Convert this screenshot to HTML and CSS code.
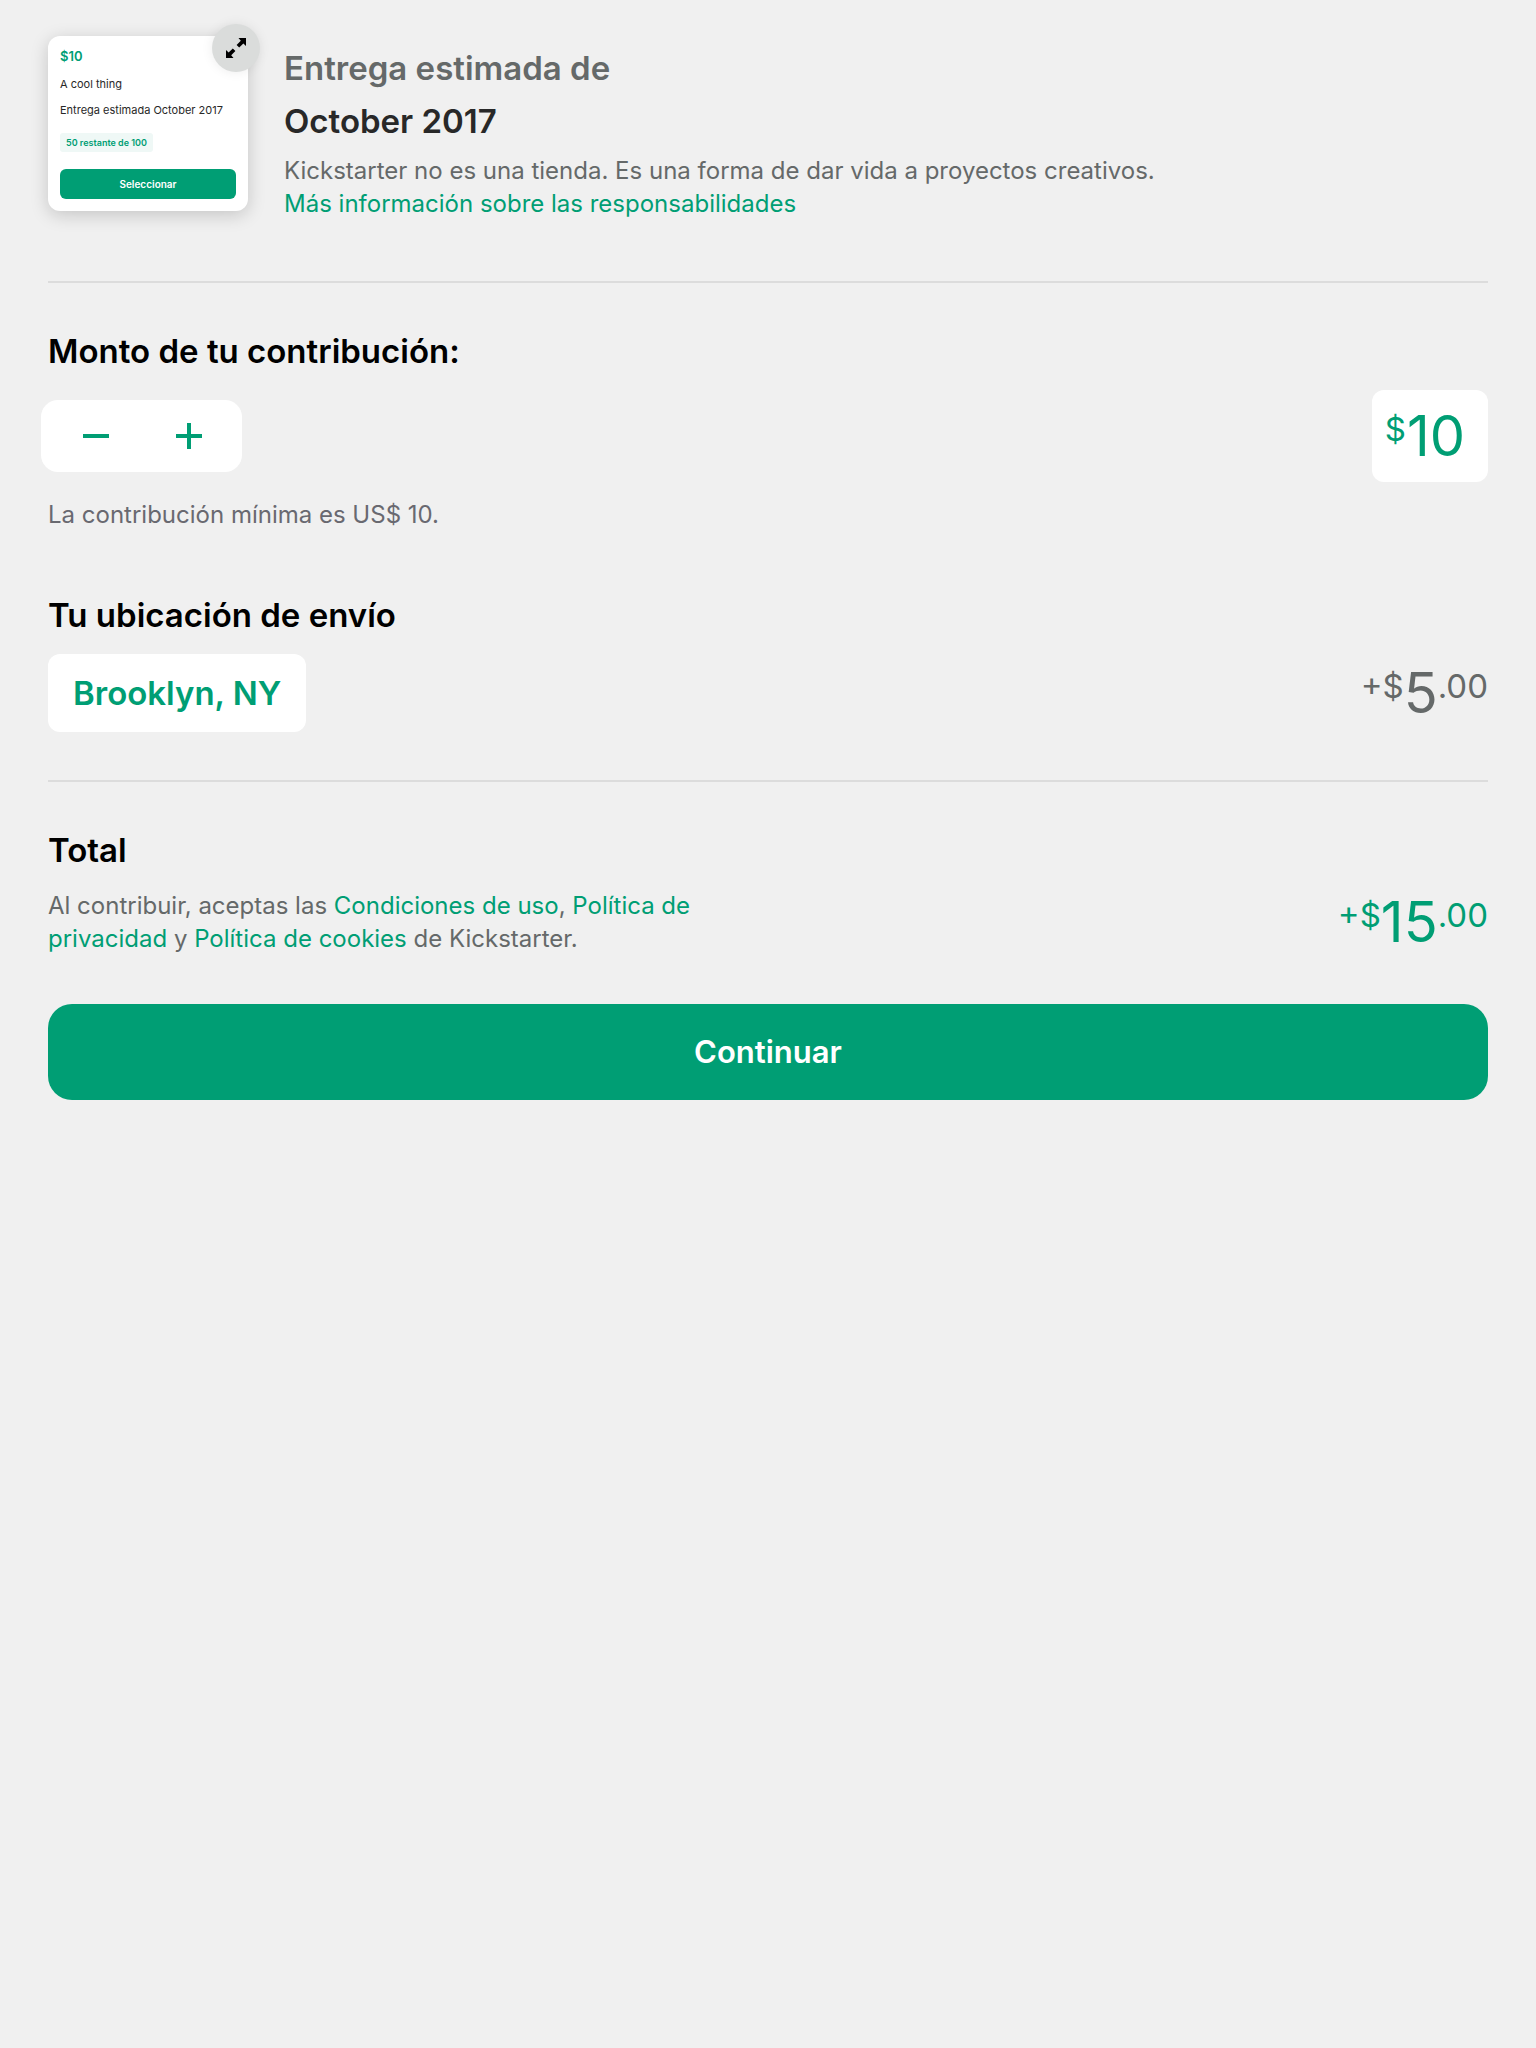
FILE: index.html
```html
<!DOCTYPE html>
<html lang="es">
<head>
<meta charset="utf-8">
<meta name="viewport" content="width=device-width, initial-scale=1">
<title>Contribución</title>
<link rel="stylesheet" href="styles.css">
</head>
<body>
<main class="pledge">
  <header class="summary">
    <div class="reward">
      <p class="reward-price">$10</p>
      <p class="reward-line">A cool thing</p>
      <p class="reward-line">Entrega estimada October 2017</p>
      <span class="reward-badge">50 restante de 100</span>
      <button class="reward-select" type="button">Seleccionar</button>
      <button class="expand" type="button" aria-label="Ampliar">
        <svg width="20" height="20" viewBox="0 0 20 20" aria-hidden="true">
          <path d="M12.500 0H20v8l-2.600-2.600-4.200 4.200-2.600-2.600 4.200-4.200zM7.500 20H0v-8l2.600 2.600 4.200-4.200 2.600 2.600-4.200 4.200z"/>
        </svg>
      </button>
    </div>
    <div class="delivery">
      <h2 class="heading muted">Entrega estimada de</h2>
      <h2 class="heading date">October 2017</h2>
      <p class="copy">Kickstarter no es una tienda. Es una forma de dar vida a proyectos creativos.<br><a class="link" href="#">Más información sobre las responsabilidades</a></p>
    </div>
  </header>

  <section class="section">
    <label class="heading" for="amount">Monto de tu contribución:</label>
    <div class="row">
      <div class="stepper">
        <button class="step" type="button" aria-label="Reducir"><svg width="28" height="28" viewBox="0 0 28 28" aria-hidden="true"><path d="M1 14h26"/></svg></button>
        <button class="step" type="button" aria-label="Aumentar"><svg width="28" height="28" viewBox="0 0 28 28" aria-hidden="true"><path d="M1 14h26M14 1v26"/></svg></button>
      </div>
      <div class="amount price">
        <span class="small">$</span><input class="amount-input" id="amount" type="text" inputmode="numeric" value="10">
      </div>
    </div>
    <p class="copy hint">La contribución mínima es US$ 10.</p>

    <h2 class="heading shipping">Tu ubicación de envío</h2>
    <div class="row">
      <button class="location" type="button">Brooklyn, NY</button>
      <p class="price muted"><span class="small">+$</span>5<span class="small">.00</span></p>
    </div>
  </section>

  <section class="section">
    <h2 class="heading">Total</h2>
    <div class="row">
      <p class="copy terms">Al contribuir, aceptas las <a class="link" href="#">Condiciones de uso</a>, <a class="link" href="#">Política de privacidad</a> y <a class="link" href="#">Política de cookies</a> de Kickstarter.</p>
      <p class="price total"><span class="small">+$</span>15<span class="small">.00</span></p>
    </div>
    <button class="continue" type="button">Continuar</button>
  </section>
</main>
</body>
</html>
```
FILE: styles.css
```css
:root {
  --green: #009e74;
  --gray: #656969;
}

* {
  box-sizing: border-box;
  margin: 0;
}

body {
  background: #f0f0f0;
  color: #000;
  font-family: Inter, "Liberation Sans", sans-serif;
}

button,
input {
  border: 0;
  padding: 0;
  font: inherit;
}

button {
  cursor: pointer;
}

.pledge {
  padding: 36px 48px;
}

.summary {
  display: flex;
  align-items: flex-start;
  gap: 36px;
  padding-bottom: 61px;
}

/* Reward thumbnail */
.reward {
  position: relative;
  flex: none;
  display: flex;
  flex-direction: column;
  align-items: flex-start;
  width: 200px;
  padding: 12px;
  border-radius: 12px;
  background: #fff;
  box-shadow: 0 4px 18px rgba(0, 0, 0, 0.18);
}

.reward-price {
  margin-bottom: 12px;
  color: var(--green);
  font-size: 13px;
  font-weight: 600;
  line-height: 16px;
}

.reward-line {
  margin-bottom: 10px;
  color: #282828;
  font-size: 11px;
  line-height: 16px;
  white-space: nowrap;
}

.reward-badge {
  margin: 5px 0 17px;
  padding: 0 6px;
  border-radius: 3px;
  background: #eff8f6;
  color: var(--green);
  font-size: 9px;
  font-weight: 600;
  line-height: 19px;
}

.reward-select {
  width: 100%;
  border-radius: 6px;
  background: var(--green);
  color: #fff;
  font-size: 10px;
  font-weight: 600;
  line-height: 30px;
}

.expand {
  position: absolute;
  top: -12px;
  right: -12px;
  display: flex;
  align-items: center;
  justify-content: center;
  width: 48px;
  height: 48px;
  border-radius: 50%;
  background: #dadcdb;
  box-shadow: 0 0 12px rgba(0, 0, 0, 0.08);
}

.delivery {
  display: flex;
  flex-direction: column;
  gap: 13px;
  padding-top: 12px;
}

/* Shared text */
.heading {
  display: block;
  font-size: 33px;
  font-weight: 600;
  line-height: 40px;
}

.date {
  color: #282828;
}

.muted {
  color: var(--gray);
}

.copy {
  color: var(--gray);
  font-size: 24px;
  line-height: 33px;
}

.link {
  color: var(--green);
  text-decoration: none;
}

.hint {
  margin-top: 16px;
  color: #696970;
}

/* Sections */
.section {
  padding: 48px 0;
  border-top: 2px solid #dcdcdc;
}

.row {
  display: flex;
  align-items: center;
  justify-content: space-between;
  gap: 24px;
  margin-top: 19px;
}

.shipping {
  margin-top: 64px;
}

.stepper {
  display: flex;
  margin-left: -7px;
  padding: 0 7px 0 8px;
  border-radius: 17px;
  background: #fff;
}

.step {
  display: flex;
  align-items: center;
  justify-content: center;
  width: 93px;
  height: 72px;
  background: none;
}

.step path {
  fill: none;
  stroke: var(--green);
  stroke-width: 4;
}

.price {
  font-size: 56px;
  line-height: 60px;
  white-space: nowrap;
}

.small {
  font-size: 33px;
  line-height: 1px;
  vertical-align: 15px;
}

.amount {
  padding: 16px 23px 16px 13px;
  border-radius: 12px;
  background: #fff;
  color: var(--green);
}

.amount-input {
  width: 59px;
  height: 60px;
  background: none;
  color: inherit;
  text-align: right;
}

.location {
  padding: 0 25px;
  border-radius: 12px;
  background: #fff;
  color: var(--green);
  font-size: 33px;
  font-weight: 600;
  line-height: 78px;
}

.terms {
  width: 46%;
}

.total {
  color: var(--green);
}

.continue {
  width: 100%;
  margin-top: 49px;
  border-radius: 24px;
  background: var(--green);
  color: #fff;
  font-size: 31px;
  font-weight: 600;
  line-height: 96px;
}
```
